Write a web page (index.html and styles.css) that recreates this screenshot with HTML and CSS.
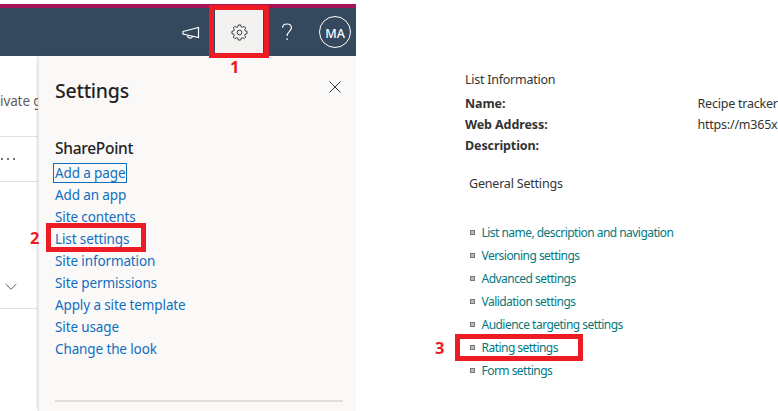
FILE: index.html
```html
<!DOCTYPE html>
<html lang="en">
<head>
<meta charset="utf-8">
<title>List settings</title>
<link rel="stylesheet" href="styles.css">
</head>
<body>
<div class="screen">
  <section class="site">
    <header class="suite-bar">
      <svg class="megaphone" viewBox="0 0 18 14"><path d="M1 5.500 16.500 1.500v10L1 8zM5.500 9.200c0 3.200 4.300 3.800 5 1.200"/></svg>
      <div class="gear-button">
        <svg class="gear" viewBox="0 0 18 18"><path d="M7.7 1h2.6l.5 2.1 1.1.5 1.9-1.2 1.8 1.8-1.2 1.9.5 1.1 2.1.5v2.6l-2.1.5-.5 1.1 1.2 1.9-1.8 1.8-1.9-1.2-1.1.5-.5 2.1H7.7l-.5-2.1-1.1-.5-1.9 1.2-1.8-1.8 1.2-1.9-.5-1.1L1 10.3V7.7l2.1-.5.5-1.1-1.2-1.9 1.8-1.8 1.9 1.2 1.1-.5z"/><circle cx="9" cy="9" r="2.5"/></svg>
        <span class="mark mark-gear"></span>
        <b class="step step-1">1</b>
      </div>
      <svg class="help" viewBox="0 0 12 18"><path d="M1.500 4.700C1.700 2.300 3.400 1 6 1s4.400 1.500 4.400 3.800c0 3.500-4.300 3.700-4.300 8.200M6.100 15.200v1.800"/></svg>
      <div class="avatar">MA</div>
    </header>
    <div class="site-body">
      <aside class="page-edge">
        <div class="edge-row edge-info"><span>ivate g</span></div>
        <div class="edge-row edge-more"><i></i><i></i><i></i></div>
        <div class="edge-row edge-expand"><svg viewBox="0 0 12 8"><path d="m.7 1 5.300 5.300L11.300 1"/></svg></div>
      </aside>
      <div class="panel">
        <div class="panel-head">
          <h1>Settings</h1>
          <svg viewBox="0 0 12 12"><path d="m.5.5 11 11m0-11-11 11"/></svg>
        </div>
        <h2>SharePoint</h2>
        <ul class="panel-links">
          <li><a class="focused">Add a page</a></li>
          <li><a>Add an app</a></li>
          <li><a>Site contents</a></li>
          <li><a>List settings</a><span class="mark mark-list"></span><b class="step step-2">2</b></li>
          <li><a>Site information</a></li>
          <li><a>Site permissions</a></li>
          <li><a>Apply a site template</a></li>
          <li><a>Site usage</a></li>
          <li><a>Change the look</a></li>
        </ul>
        <hr>
      </div>
    </div>
  </section>
  <section class="details">
    <h3>List Information</h3>
    <dl>
      <dt>Name:</dt><dd>Recipe tracker</dd>
      <dt>Web Address:</dt><dd>https://m365x</dd>
      <dt>Description:</dt><dd></dd>
    </dl>
    <h4>General Settings</h4>
    <ul class="general">
      <li><a>List name, description and navigation</a></li>
      <li><a>Versioning settings</a></li>
      <li><a>Advanced settings</a></li>
      <li><a>Validation settings</a></li>
      <li><a>Audience targeting settings</a></li>
      <li><a>Rating settings</a><span class="mark mark-rating"></span><b class="step step-3">3</b></li>
      <li><a>Form settings</a></li>
    </ul>
  </section>
</div>
</body>
</html>
```
FILE: styles.css
```css
* { box-sizing: border-box; }
body { margin: 0; background: #fff; font-family: "Noto Sans", "Open Sans", sans-serif; color: #333; }
h1, h2, h3, h4, ul, dl, dd { margin: 0; padding: 0; font-weight: 400; }
ul { list-style: none; }
svg { fill: none; stroke: currentColor; flex: none; }
.screen { display: flex; width: 778px; height: 411px; overflow: hidden; white-space: nowrap; }
.site { width: 356px; padding-top: 4px; flex: none; }

.suite-bar { display: flex; align-items: center; height: 52px; border-top: 4px solid #a4145a; background: #34495e; color: #fff; padding-left: 182px; }
.megaphone { width: 18px; height: 14px; stroke-width: 1.2; margin-top: 2px; }
.gear-button { position: relative; display: flex; align-items: center; justify-content: center; width: 48px; height: 48px; margin-left: 15px; background: #f3f2f1; color: #333; }
.gear { width: 17px; height: 17px; }
.help { width: 12px; height: 18px; margin-left: 18px; stroke-width: 1.2; }
.avatar { display: flex; align-items: center; justify-content: center; width: 32px; height: 32px; margin-left: 26px; border: 1px solid #fff; border-radius: 50%; font-size: 12.5px; font-weight: 500; padding-top: 3px; }

.mark { position: absolute; border: 5px solid #ed1c24; }
.mark-gear { left: -6px; top: -3px; width: 60px; height: 53px; }
.mark-list { left: -9px; top: -5px; width: 100px; height: 29px; }
.mark-rating { left: -15px; top: -2px; width: 128px; height: 27px; }
.step { position: absolute; color: #ed1c24; font: bold 16.5px/18px "Noto Sans", sans-serif; letter-spacing: 0; }
.step-1 { left: 15px; top: 50px; }
.step-2 { left: -25px; top: 1px; }
.step-3 { left: -35px; top: 3px; }

.site-body { display: flex; height: 355px; }
.page-edge { width: 38px; flex: none; overflow: hidden; color: #605e5c; font-size: 13.5px; letter-spacing: -.1px; }
.edge-row { display: flex; border-bottom: 1px solid #e1dfdd; }
.edge-info { height: 81px; align-items: center; padding-top: 10px; }
.edge-more { height: 45px; gap: 4px; padding: 21px 0 0 1px; }
.edge-more i { width: 2px; height: 2px; background: #737373; }
.edge-expand { height: 127px; padding: 101px 0 0 5px; }
.edge-expand svg { width: 12px; height: 8px; }
.panel { width: 318px; padding: 23px 13px 0 16px; border-left: 1px solid #e8e7e6; background: #faf9f8; box-shadow: -2px 0 2px -1px #0002; }
.panel-head { display: flex; justify-content: space-between; color: #333; }
.panel-head svg { width: 12px; height: 12px; margin: 2px 2px 0 0; }
h1 { font-size: 19.5px; line-height: 24px; font-weight: 500; color: #252423; letter-spacing: -.25px; }
h2 { margin-top: 35px; font-size: 15.5px; line-height: 20px; font-weight: 500; color: #252423; letter-spacing: -.28px; }
.panel-links { margin-top: 4px; font-size: 13.5px; line-height: 22px; color: #106ebe; letter-spacing: -.12px; }
.panel-links li { position: relative; height: 22px; }
.focused { outline: 1px solid #106ebe; display: inline-block; height: 16px; line-height: 16px; vertical-align: top; margin-top: 3px; outline-offset: 1px; }
hr { height: 2px; border: 0; background: #e1dfdd; margin: 40px 0 0; }

.details { flex: 1; padding: 70px 0 0 109px; font-size: 12.5px; letter-spacing: -.2px; }
h3 { font-size: 12.5px; line-height: 20px; letter-spacing: -.25px; }
dl { display: grid; grid-template-columns: 232.5px 1fr; grid-auto-rows: 21px; line-height: 21px; margin-top: 3px; }
dt { font-weight: 700; letter-spacing: -.1px; }
dd { letter-spacing: -.22px; }
h4 { margin: 18px 0 0 4px; font-size: 12.5px; line-height: 20px; }
.general { margin: 27px 0 0 5px; font-size: 12px; line-height: 23px; color: #03787c; letter-spacing: -.53px; }
.general li { position: relative; display: flex; align-items: center; height: 23px; }
.general li::before { content: ""; box-sizing: border-box; width: 5px; height: 5px; margin-right: 6.5px; border: 1px solid #777; background: #bbb; }
```
